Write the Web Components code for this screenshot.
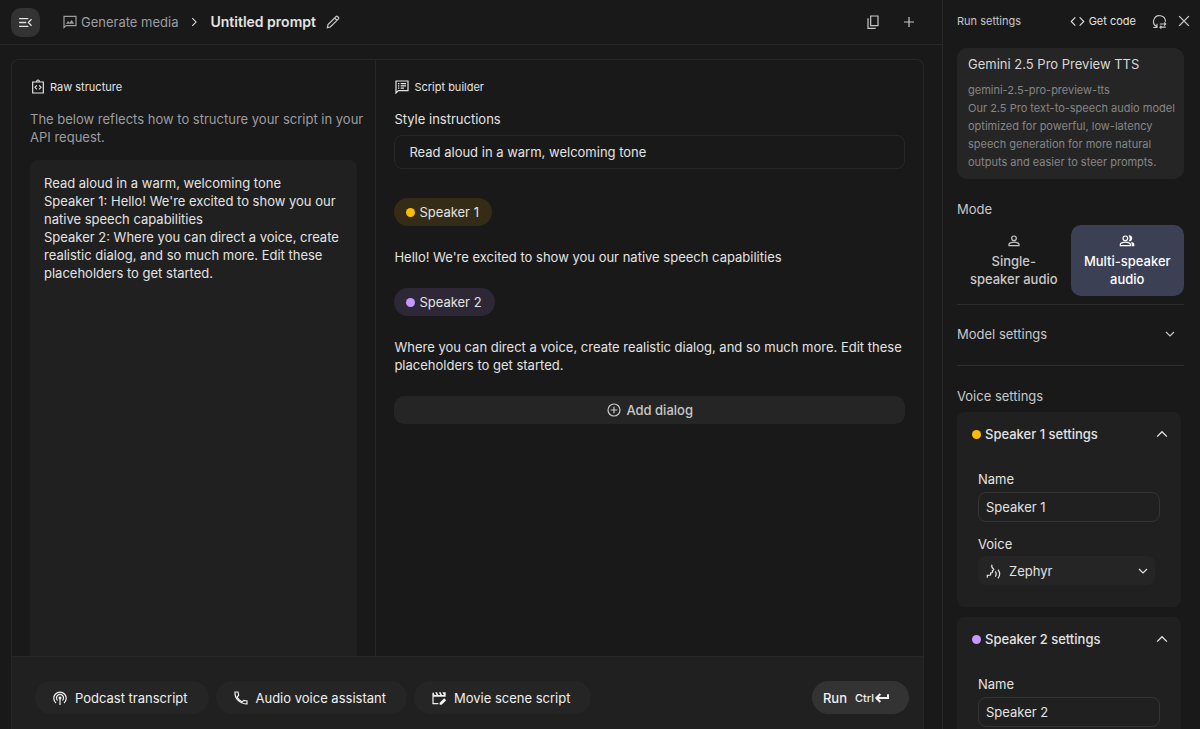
<!DOCTYPE html>
<html lang="en">
<head>
<meta charset="utf-8">
<meta name="viewport" content="width=device-width, initial-scale=1">
<title>Untitled prompt</title>
<style>
    :root {
        --bg: #191919;
        --surface: #202020;
        --raised: #252525;
        --button: #333;
        --line: #272727;
        --divider: #2e2e2e;
        --text: #e3e3e3;
        --soft: #c8c8c8;
        --muted: #9d9da0;
        --dim: #868686;
        --yellow: #fbbc04;
        --purple: #c597ff;
    }

    body {
        margin: 0;
        height: 100vh;
        overflow: hidden;
        background: var(--bg);
        color: var(--text);
        font: 13px/18px Inter, "Liberation Sans", sans-serif;
    }
</style>
</head>
<body>

<template id="studio-app-template">
    <style>
        :host {
            display: grid;
            grid-template-columns: minmax(0, 1fr) 257px;
            height: 100%;
        }

        main {
            display: flex;
            flex-direction: column;
            min-height: 0;
            border-right: 1px solid var(--line);
        }

        .panel {
            flex: 1;
            display: flex;
            flex-direction: column;
            min-height: 0;
            margin: 14px 18px 0 11px;
            border: 1px solid var(--line);
            border-bottom: 0;
            border-radius: 8px 8px 0 0;
        }

        .columns {
            flex: 1;
            display: grid;
            grid-template-columns: 2fr 3fr;
            min-height: 0;
            overflow: hidden;
        }
    </style>

    <main>
        <prompt-header></prompt-header>
        <div class="panel">
            <div class="columns">
                <raw-structure></raw-structure>
                <script-builder></script-builder>
            </div>
            <prompt-footer></prompt-footer>
        </div>
    </main>
    <run-settings></run-settings>
</template>

<template id="prompt-header-template">
    <style>
        :host {
            display: flex;
            align-items: center;
            height: 44px;
            padding: 0 25px 0 11px;
            border-bottom: 1px solid var(--line);
        }

        button {
            display: flex;
            padding: 0;
            border: 0;
            background: none;
            color: var(--soft);
            cursor: pointer;
        }

        .menu {
            padding: 6px;
            border-radius: 10px;
            background: var(--button);
            color: var(--text);
        }

        nav {
            flex: 1;
            display: flex;
            align-items: center;
            gap: 9px;
            margin-left: 22px;
        }

        a {
            display: flex;
            align-items: center;
            gap: 3px;
            color: var(--muted);
            text-decoration: none;
        }

        h1 {
            margin: 0;
            font-size: 14px;
            font-weight: 600;
        }

        .actions {
            display: flex;
            gap: 20px;
        }
    </style>

    <button class="menu" aria-label="Toggle navigation"><app-icon name="menu" size="17"></app-icon></button>
    <nav aria-label="Breadcrumb">
        <a href="#media"><app-icon name="media"></app-icon>Generate media</a>
        <app-icon name="right" size="14"></app-icon>
        <h1>Untitled prompt</h1>
        <button aria-label="Edit title"><app-icon name="edit"></app-icon></button>
    </nav>
    <div class="actions">
        <button aria-label="Copy"><app-icon name="copy"></app-icon></button>
        <button aria-label="New prompt"><app-icon name="plus"></app-icon></button>
    </div>
</template>

<template id="panel-title-template">
    <style>
        :host {
            display: block;
        }

        h2 {
            display: flex;
            align-items: center;
            gap: 4px;
            margin: 0;
            font-size: 11px;
            font-weight: 400;
        }
    </style>

    <h2><app-icon></app-icon><slot></slot></h2>
</template>

<template id="raw-structure-template">
    <style>
        :host {
            display: flex;
            flex-direction: column;
            padding: 18px 18px 0;
            border-right: 1px solid var(--line);
        }

        p {
            margin: 14px -10px 14px 0;
            color: var(--muted);
        }

        .raw {
            flex: 1;
            padding: 14px;
            border-radius: 8px 8px 0 0;
            background: var(--surface);
            white-space: pre-line;
        }
    </style>

    <panel-title icon="braces">Raw structure</panel-title>
    <p>The below reflects how to structure your script in your API request.</p>
    <div class="raw">Read aloud in a warm, welcoming tone
Speaker 1: Hello! We're excited to show you our native speech capabilities
Speaker 2: Where you can direct a voice, create realistic dialog, and so much more. Edit these placeholders to get started.</div>
</template>

<template id="script-builder-template">
    <style>
        :host {
            display: flex;
            flex-direction: column;
            padding: 18px 18px 0;
        }

        label {
            margin-top: 14px;
        }

        input {
            box-sizing: border-box;
            height: 34px;
            margin: 7px 0 29px;
            padding: 0 14px;
            border: 1px solid var(--line);
            border-radius: 8px;
            background: none;
            color: inherit;
            font: inherit;
        }

        textarea {
            display: block;
            width: 100%;
            margin: 22px 0;
            padding: 0;
            border: 0;
            background: none;
            color: inherit;
            font: inherit;
            resize: none;
            field-sizing: content;
        }

        button {
            display: flex;
            align-items: center;
            justify-content: center;
            gap: 4px;
            height: 28px;
            padding: 0;
            border: 0;
            border-radius: 10px;
            background: var(--raised);
            color: var(--soft);
            font: inherit;
            font-weight: 500;
            cursor: pointer;
        }
    </style>

    <panel-title icon="script">Script builder</panel-title>
    <label for="style">Style instructions</label>
    <input id="style" type="text" value="Read aloud in a warm, welcoming tone">
    <speaker-chip color="yellow">Speaker 1</speaker-chip>
    <textarea rows="1" aria-label="Speaker 1 dialog">Hello! We're excited to show you our native speech capabilities</textarea>
    <speaker-chip color="purple">Speaker 2</speaker-chip>
    <textarea rows="2" aria-label="Speaker 2 dialog">Where you can direct a voice, create realistic dialog, and so much more. Edit these placeholders to get started.</textarea>
    <button><app-icon name="add"></app-icon>Add dialog</button>
</template>

<template id="speaker-chip-template">
    <style>
        :host {
            --dot: var(--yellow);
            --fill: #352c17;
            display: flex;
        }

        :host([color="purple"]) {
            --dot: var(--purple);
            --fill: #2e2735;
        }

        button {
            display: flex;
            align-items: center;
            gap: 4px;
            height: 28px;
            padding: 0 13px 0 12px;
            border: 0;
            border-radius: 14px;
            background: var(--fill);
            color: inherit;
            font: inherit;
            cursor: pointer;
        }

        .dot {
            width: 9px;
            height: 9px;
            border-radius: 50%;
            background: var(--dot);
        }
    </style>

    <button><span class="dot"></span><slot></slot></button>
</template>

<template id="prompt-footer-template">
    <style>
        :host {
            display: flex;
            align-items: center;
            gap: 7px;
            padding: 24px 14px 15px 23px;
            border-top: 1px solid var(--line);
            background: var(--surface);
        }

        button {
            display: flex;
            align-items: center;
            gap: 7px;
            height: 33px;
            padding: 0 21px 0 17px;
            border: 0;
            border-radius: 17px;
            background: var(--raised);
            color: #f0f0f0;
            font: inherit;
            cursor: pointer;
        }

        .run {
            gap: 8px;
            margin-left: auto;
            padding: 0 19px 0 11px;
            background: var(--button);
            font-weight: 500;
        }

        .keys {
            display: flex;
            align-items: center;
            font-size: 11px;
        }
    </style>

    <button><app-icon name="podcast"></app-icon>Podcast transcript</button>
    <button><app-icon name="phone"></app-icon>Audio voice assistant</button>
    <button><app-icon name="movie"></app-icon>Movie scene script</button>
    <button class="run">Run <span class="keys">Ctrl<app-icon name="enter"></app-icon></span></button>
</template>

<template id="run-settings-template">
    <style>
        :host {
            display: flex;
            flex-direction: column;
            min-height: 0;
            overflow: hidden;
            padding: 0 16px 0 14px;
        }

        header {
            display: flex;
            align-items: center;
            gap: 16px;
            height: 42px;
            margin: 0 -9px 6px 0;
            flex: none;
            font-size: 11px;
        }

        h2, h3 {
            margin: 0;
            color: var(--soft);
            font-weight: 400;
        }

        h2 {
            flex: 1;
            font-size: 11px;
        }

        h3 {
            font-size: 13px;
        }

        button {
            display: flex;
            align-items: center;
            padding: 0;
            border: 0;
            background: none;
            color: var(--soft);
            font: inherit;
            cursor: pointer;
        }

        .code {
            gap: 4px;
            color: var(--text);
        }

        .close {
            margin-left: -8px;
        }

        .model {
            flex-direction: column;
            align-items: stretch;
            gap: 8px;
            padding: 7px 4px 8px 11px;
            border-radius: 10px;
            background: var(--raised);
            text-align: left;
        }

        .model strong {
            color: #d8d8d8;
            font-weight: 400;
        }

        .model span {
            color: var(--dim);
            font-size: 11px;
        }

        .mode {
            margin-top: 21px;
        }

        .modes {
            display: grid;
            grid-template-columns: 1fr 1fr;
            margin: 7px 0 8px;
        }

        .modes button {
            flex-direction: column;
            gap: 3px;
            padding: 8px 10px;
            border-radius: 10px;
            font-weight: 500;
        }

        .modes button[aria-pressed="true"] {
            background: #3c4054;
            color: #fff;
        }

        .expand {
            justify-content: space-between;
            height: 62px;
            padding: 0 6px 3px 0;
            border: solid var(--divider);
            border-width: 1px 0;
            flex: none;
        }

        .voice {
            margin: 21px 0 7px;
        }

        speaker-settings {
            margin: 0 3px 10px 0;
        }
    </style>

    <header>
        <h2>Run settings</h2>
        <button class="code"><app-icon name="code" size="15"></app-icon>Get code</button>
        <button aria-label="Reset settings"><app-icon name="reset" size="15"></app-icon></button>
        <button class="close" aria-label="Close panel"><app-icon name="close" size="18"></app-icon></button>
    </header>
    <button class="model">
        <strong>Gemini 2.5 Pro Preview TTS</strong>
        <span>gemini-2.5-pro-preview-tts<br>Our 2.5 Pro text-to-speech audio model optimized for powerful, low-latency speech generation for more natural outputs and easier to steer prompts.</span>
    </button>
    <h3 class="mode">Mode</h3>
    <div class="modes">
        <button aria-pressed="false"><app-icon name="person"></app-icon>Single-speaker audio</button>
        <button aria-pressed="true"><app-icon name="people"></app-icon>Multi-speaker audio</button>
    </div>
    <button class="expand" aria-expanded="false">Model settings<app-icon name="down"></app-icon></button>
    <h3 class="voice">Voice settings</h3>
    <speaker-settings speaker="Speaker 1" color="yellow" voice="Zephyr"></speaker-settings>
    <speaker-settings speaker="Speaker 2" color="purple" voice="Puck"></speaker-settings>
</template>

<template id="speaker-settings-template">
    <style>
        :host {
            --dot: var(--yellow);
            display: block;
            flex: none;
            border-radius: 8px;
            background: var(--surface);
        }

        :host([color="purple"]) {
            --dot: var(--purple);
        }

        .head {
            display: flex;
            align-items: center;
            gap: 4px;
            width: 100%;
            height: 44px;
            padding: 0 10px 0 15px;
            border: 0;
            background: none;
            color: var(--text);
            font: inherit;
            font-weight: 500;
            text-align: left;
            cursor: pointer;
        }

        .dot {
            width: 9px;
            height: 9px;
            border-radius: 50%;
            background: var(--dot);
        }

        .title {
            flex: 1;
        }

        .fields {
            display: flex;
            flex-direction: column;
            padding: 14px 21px 22px;
        }

        input {
            box-sizing: border-box;
            height: 30px;
            margin: 4px 0 13px;
            padding: 0 7px;
            border: 1px solid #343434;
            border-radius: 8px;
            background: none;
            color: inherit;
            font: inherit;
        }

        .select {
            display: flex;
            align-items: center;
            gap: 7px;
            height: 29px;
            margin: 3px 5px 0 0;
            padding: 0 4px 0 8px;
            border-radius: 8px;
            background: var(--raised);
        }

        select {
            flex: 1;
            min-width: 0;
            padding: 0;
            border: 0;
            appearance: none;
            background: none;
            color: inherit;
            font: inherit;
        }
    </style>

    <button class="head" aria-expanded="true">
        <span class="dot"></span><span class="title"></span><app-icon name="up" size="18"></app-icon>
    </button>
    <div class="fields">
        <label for="name">Name</label>
        <input id="name" type="text">
        <label for="voice">Voice</label>
        <div class="select">
            <app-icon name="voice"></app-icon>
            <select id="voice"></select>
            <app-icon name="down"></app-icon>
        </div>
    </div>
</template>

<studio-app></studio-app>

<script>
    // All icons are drawn on a 24 unit grid.
    const icons = {
        menu: '<path d="M3 6.500h13M3 12h10M3 17.500h13M20.500 7.500 16 12l4.500 4.500"/>',
        media: '<path d="M3 20.500V3.500h18v14H6Z"/><path class="fill" d="m6 14.500 3-4 2.200 2.800L14.500 9l3.800 5.500Z"/>',
        right: '<path d="m9 5.500 6.500 6.500-6.500 6.500"/>',
        down: '<path d="m6 9 6 6 6-6"/>',
        up: '<path d="m5.500 15.500 6.500-6.500 6.500 6.500"/>',
        edit: '<path d="M3.500 20.500 4.500 16 16.800 3.800q1-1 2 0l1.400 1.400q1 1 0 2L8 19.500ZM14.500 6l3.500 3.500"/>',
        copy: '<path d="M8.500 3h11v14.500h-11ZM4.500 6.500V21.500H16"/>',
        plus: '<path d="M12 4.500v15M4.500 12h15"/>',
        braces: '<path d="M4 4.500h16V21H4ZM10 4.300V3.500a2 2 0 0 1 4 0v.8M10.300 9.500 7.500 12.500l2.800 3M13.700 9.500l2.800 3-2.800 3"/>',
        script: '<path d="M3 21V3h18v14.500H6.500Z"/><path d="M6 7h2M6 10.300h2M6 13.600h2M10 7h8M10 10.300h8M10 13.600h5"/>',
        add: '<circle cx="12" cy="12" r="9"/><path d="M12 7v10M7 12h10"/>',
        podcast: '<path d="M6 19.500a9.300 9.300 0 1 1 12 0M8.300 15.800a5.300 5.300 0 1 1 7.400 0M12 13v9.500"/><circle class="fill" cx="12" cy="12" r="2.200"/>',
        phone: '<path d="M3 3h4.500l1 4.800L6 10.500q2.700 4.800 7.500 7.500l2.700-2.500 4.800 1V21Q13.500 21 8 16T3 3Z"/>',
        movie: '<path d="M3 9v11.500h8M3 9V4"/><path class="fill" d="m3 3.500 2.500 4h2.800L6.300 3.500H9l2 4h2.800l-2-4h2.700l2 4h2.700l-2-4H22V10H3ZM13 22v-3l6.800-6.800 3 3L16 22Z"/>',
        enter: '<path stroke-width="3" d="M21 6.500V12H4.500M9.500 6l-6 6 6 6"/>',
        code: '<path d="m8.500 5.500-6.500 6.500 6.500 6.500M15.500 5.500 22 12l-6.500 6.500"/>',
        reset: '<path d="M2 21.500h6V15.500M7.500 20.500A9.500 9.500 0 1 1 21.500 12.500"/><path d="M12.500 16h9M19.500 13.500l2.500 2.500-2.500 2.500M22 21h-9M15 18.800 12.700 21l2.300 2.200"/>',
        close: '<path d="m5.500 5.500 13 13M18.500 5.500l-13 13"/>',
        person: '<circle cx="12" cy="8" r="3.500"/><path d="M4.500 19v-2q0-1.500 2-2.200 5.500-2.300 11 0 2 .7 2 2.200v2Z"/>',
        people: '<circle cx="9.500" cy="8" r="3.500"/><path d="M2 19v-2q0-1.500 2-2.200 5.500-2.300 11 0 2 .7 2 2.200v2Z"/><path class="fill" d="M14.500 3.600a4.500 4.500 0 1 1 0 8.800q3-4.400 0-8.800ZM18 13.500q5 .8 5 3.500v3h-4v-3q0-2-1-3.500Z"/>',
        voice: '<path d="M9 2.500Q7.500 6 11 8.500q1.500 1.500-.5 2.500l-1 .5q1 2.500-.5 3l-2 .5q.5 3-1 3.200l-4 .3V22"/><path d="M14 12.500q2.500 4 0 8M18 10q5 6.500 0 13"/>'
    };

    class BaseElement extends HTMLElement {
        connectedCallback() {
            if (this.shadowRoot) return;
            const shadowRoot = this.attachShadow({ mode: 'open' });
            const template = document.getElementById(`${this.localName}-template`);
            shadowRoot.appendChild(template.content.cloneNode(true));
            this._init();
        }

        _init() {}

        find(selector) {
            return this.shadowRoot.querySelector(selector);
        }
    }

    class AppIcon extends HTMLElement {
        static get observedAttributes() {
            return ['name'];
        }

        connectedCallback() {
            this.render();
        }

        attributeChangedCallback() {
            if (this.isConnected) this.render();
        }

        render() {
            const size = Number(this.getAttribute('size') || 16);
            const shadowRoot = this.shadowRoot || this.attachShadow({ mode: 'open' });
            shadowRoot.innerHTML = `
                <style>
                    :host { display: block; flex: none; pointer-events: none; }
                    svg { display: block; fill: none; stroke: currentColor; }
                    .fill { fill: currentColor; stroke: none; }
                </style>
                <svg width="${size}" height="${size}" viewBox="0 0 24 24" stroke-width="1.8" aria-hidden="true">
                    ${icons[this.getAttribute('name')] || ''}
                </svg>`;
        }
    }

    class PanelTitle extends BaseElement {
        _init() {
            this.find('app-icon').setAttribute('name', this.getAttribute('icon'));
        }
    }

    class SpeakerSettings extends BaseElement {
        _init() {
            const speaker = this.getAttribute('speaker');
            this.find('.title').textContent = `${speaker} settings`;
            this.find('input').value = speaker;
            this.find('select').add(new Option(this.getAttribute('voice')));

            const head = this.find('.head');
            head.addEventListener('click', () => {
                const open = head.getAttribute('aria-expanded') != 'true';
                head.setAttribute('aria-expanded', open);
                this.find('.fields').style.display = open ? '' : 'none';
                this.find('.head app-icon').setAttribute('name', open ? 'up' : 'down');
            });
        }
    }

    class RunSettings extends BaseElement {
        _init() {
            const modes = this.shadowRoot.querySelectorAll('.modes button');
            modes.forEach(mode => mode.addEventListener('click', () => {
                modes.forEach(other => other.setAttribute('aria-pressed', other == mode));
            }));
        }
    }

    customElements.define('app-icon', AppIcon);
    customElements.define('panel-title', PanelTitle);
    customElements.define('speaker-chip', class extends BaseElement {});
    customElements.define('speaker-settings', SpeakerSettings);
    customElements.define('prompt-header', class extends BaseElement {});
    customElements.define('raw-structure', class extends BaseElement {});
    customElements.define('script-builder', class extends BaseElement {});
    customElements.define('prompt-footer', class extends BaseElement {});
    customElements.define('run-settings', RunSettings);
    customElements.define('studio-app', class extends BaseElement {});
</script>
</body>
</html>
